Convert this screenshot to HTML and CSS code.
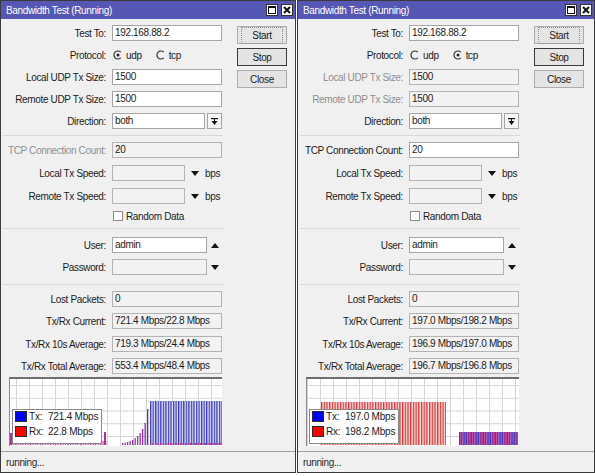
FILE: index.html
```html
<!DOCTYPE html>
<html>
<head>
<meta charset="utf-8">
<link rel="stylesheet" href="styles.css">
</head>
<body>
<div class="desk">
  <!-- LEFT WINDOW (UDP) -->
  <div class="win">
    <div class="title">
      <span class="title-text">Bandwidth Test (Running)</span>
      <span class="tbtn"><svg width="10" height="10" viewBox="0 0 10 10"><rect x="1.5" y="1.5" width="7" height="7" fill="none" stroke="#111" stroke-width="1"/><rect x="1.5" y="1.5" width="7" height="1.5" fill="#111"/></svg></span>
      <span class="tbtn"><svg width="10" height="10" viewBox="0 0 10 10"><path d="M2 2L8 8M8 2L2 8" stroke="#111" stroke-width="2"/></svg></span>
    </div>
    <div class="main">
      <div class="form">
        <div class="row"><span class="lbl">Test To:</span><span class="inp w110">192.168.88.2</span></div>
        <div class="row"><span class="lbl">Protocol:</span>
          <span class="radio"><svg width="10" height="10" viewBox="0 0 10 10"><path d="M7.8 2.2A4 4 0 1 0 7.8 7.8" fill="none" stroke="#333" stroke-width="1.2"/><circle cx="5" cy="5" r="1.5" fill="#222"/></svg></span><span class="rl">udp</span>
          <span class="radio"><svg width="10" height="10" viewBox="0 0 10 10"><path d="M7.8 2.2A4 4 0 1 0 7.8 7.8" fill="none" stroke="#333" stroke-width="1.2"/></svg></span><span class="rl">tcp</span>
        </div>
        <div class="row"><span class="lbl">Local UDP Tx Size:</span><span class="inp w110">1500</span></div>
        <div class="row"><span class="lbl">Remote UDP Tx Size:</span><span class="inp w110">1500</span></div>
        <div class="row mb6b"><span class="lbl">Direction:</span><span class="inp w93">both</span><span class="ddbtn"><svg width="13" height="13" viewBox="0 0 13 13"><rect x="3" y="3" width="7" height="1.2" fill="#111"/><polygon points="3.5,6 9.5,6 6.5,10" fill="#111"/><rect x="6" y="4" width="1" height="2" fill="#111"/></svg></span></div>
        <div class="sep s1"></div>
        <div class="row mb7"><span class="lbl dis">TCP Connection Count:</span><span class="inp w110 ro">20</span></div>
        <div class="row mb7"><span class="lbl">Local Tx Speed:</span><span class="inp w73 ro"></span><span class="tri"><svg width="8" height="5" viewBox="0 0 8 5"><polygon points="0,0 8,0 4,5" fill="#111"/></svg></span><span class="unit">bps</span></div>
        <div class="row"><span class="lbl">Remote Tx Speed:</span><span class="inp w73 ro"></span><span class="tri"><svg width="8" height="5" viewBox="0 0 8 5"><polygon points="0,0 8,0 4,5" fill="#111"/></svg></span><span class="unit">bps</span></div>
        <div class="row chk"><span class="lbl"></span><span class="cbox"></span><span class="cl">Random Data</span></div>
        <div class="sep s2"></div>
        <div class="row"><span class="lbl">User:</span><span class="inp w95">admin</span><span class="tri2"><svg width="8" height="5" viewBox="0 0 8 5"><polygon points="0,5 8,5 4,0" fill="#111"/></svg></span></div>
        <div class="row mb9"><span class="lbl">Password:</span><span class="inp w95 ro"></span><span class="tri2"><svg width="8" height="5" viewBox="0 0 8 5"><polygon points="0,0 8,0 4,5" fill="#111"/></svg></span></div>
        <div class="sep s1"></div>
        <div class="row"><span class="lbl">Lost Packets:</span><span class="inp w110 ro">0</span></div>
        <div class="row mb7"><span class="lbl">Tx/Rx Current:</span><span class="inp w110 ro">721.4 Mbps/22.8 Mbps</span></div>
        <div class="row"><span class="lbl">Tx/Rx 10s Average:</span><span class="inp w110 ro">719.3 Mbps/24.4 Mbps</span></div>
        <div class="row mb3"><span class="lbl">Tx/Rx Total Average:</span><span class="inp w110 ro">553.4 Mbps/48.4 Mbps</span></div>
        <div class="graph">
          <svg width="212" height="67" viewBox="0 0 212 67">
            <defs>
              <pattern id="gridA" x="6" y="6" width="13" height="12.75" patternUnits="userSpaceOnUse"><rect width="1" height="12.75" fill="#d6d6d6"/><rect width="13" height="1" fill="#d6d6d6"/></pattern>
              <pattern id="blueA" x="140" y="0" width="2.55" height="67" patternUnits="userSpaceOnUse"><rect width="1.3" height="67" fill="#3c3cc0"/></pattern>
              <pattern id="pinkA" x="0" y="0" width="2.5" height="67" patternUnits="userSpaceOnUse"><rect width="1.2" height="67" fill="#c02c8c"/></pattern>
            </defs>
            <rect width="212" height="67" fill="url(#gridA)"/>
            <rect x="0" y="62" width="97" height="4" fill="url(#pinkA)"/>
            <rect x="0" y="54" width="2" height="12" fill="#a8309a"/>
            <rect x="94" y="53" width="2" height="13" fill="#a8309a"/>
            <rect x="112" y="64" width="1.3" height="2" fill="#9830a8"/>
            <rect x="114.5" y="63.5" width="1.3" height="2.5" fill="#9830a8"/>
            <rect x="117" y="63" width="1.3" height="3" fill="#9830a8"/>
            <rect x="119.5" y="62" width="1.3" height="4" fill="#9830a8"/>
            <rect x="122" y="61" width="1.3" height="5" fill="#9830a8"/>
            <rect x="124.5" y="59" width="1.3" height="7" fill="#9830a8"/>
            <rect x="127" y="57" width="1.3" height="9" fill="#9830a8"/>
            <rect x="129.5" y="54" width="1.3" height="12" fill="#9830a8"/>
            <rect x="132" y="50" width="1.3" height="16" fill="#9030b0"/>
            <rect x="134.5" y="44" width="1.3" height="22" fill="#8030b8"/>
            <rect x="137" y="30" width="1.3" height="36" fill="#6030c0"/>
            <rect x="140" y="22" width="72" height="44" fill="#e4e4f6"/>
            <rect x="140" y="22" width="72" height="44" fill="url(#blueA)"/>
            <rect x="140" y="64" width="72" height="2" fill="url(#pinkA)"/>
          </svg>
          <div class="legend">
            <div class="lg-row"><span class="sw blue"></span><span class="lk">Tx:</span><span>721.4 Mbps</span></div>
            <div class="lg-row"><span class="sw red"></span><span class="lk">Rx:</span><span>22.8 Mbps</span></div>
          </div>
        </div>
      </div>
      <div class="btns">
        <div class="btn start"><span>Start</span></div>
        <div class="btn stop">Stop</div>
        <div class="btn">Close</div>
      </div>
    </div>
    <div class="status">running...</div>
  </div>

  <!-- RIGHT WINDOW (TCP) -->
  <div class="win wide">
    <div class="title">
      <span class="title-text">Bandwidth Test (Running)</span>
      <span class="tbtn"><svg width="10" height="10" viewBox="0 0 10 10"><rect x="1.5" y="1.5" width="7" height="7" fill="none" stroke="#111" stroke-width="1"/><rect x="1.5" y="1.5" width="7" height="1.5" fill="#111"/></svg></span>
      <span class="tbtn"><svg width="10" height="10" viewBox="0 0 10 10"><path d="M2 2L8 8M8 2L2 8" stroke="#111" stroke-width="2"/></svg></span>
    </div>
    <div class="main">
      <div class="form">
        <div class="row"><span class="lbl">Test To:</span><span class="inp w110">192.168.88.2</span></div>
        <div class="row"><span class="lbl">Protocol:</span>
          <span class="radio"><svg width="10" height="10" viewBox="0 0 10 10"><path d="M7.8 2.2A4 4 0 1 0 7.8 7.8" fill="none" stroke="#333" stroke-width="1.2"/></svg></span><span class="rl">udp</span>
          <span class="radio"><svg width="10" height="10" viewBox="0 0 10 10"><path d="M7.8 2.2A4 4 0 1 0 7.8 7.8" fill="none" stroke="#333" stroke-width="1.2"/><circle cx="5" cy="5" r="1.5" fill="#222"/></svg></span><span class="rl">tcp</span>
        </div>
        <div class="row"><span class="lbl dis">Local UDP Tx Size:</span><span class="inp w110 ro">1500</span></div>
        <div class="row"><span class="lbl dis">Remote UDP Tx Size:</span><span class="inp w110 ro">1500</span></div>
        <div class="row mb6b"><span class="lbl">Direction:</span><span class="inp w93">both</span><span class="ddbtn"><svg width="13" height="13" viewBox="0 0 13 13"><rect x="3" y="3" width="7" height="1.2" fill="#111"/><polygon points="3.5,6 9.5,6 6.5,10" fill="#111"/><rect x="6" y="4" width="1" height="2" fill="#111"/></svg></span></div>
        <div class="sep s1"></div>
        <div class="row mb7"><span class="lbl">TCP Connection Count:</span><span class="inp w110">20</span></div>
        <div class="row mb7"><span class="lbl">Local Tx Speed:</span><span class="inp w73 ro"></span><span class="tri"><svg width="8" height="5" viewBox="0 0 8 5"><polygon points="0,0 8,0 4,5" fill="#111"/></svg></span><span class="unit">bps</span></div>
        <div class="row"><span class="lbl">Remote Tx Speed:</span><span class="inp w73 ro"></span><span class="tri"><svg width="8" height="5" viewBox="0 0 8 5"><polygon points="0,0 8,0 4,5" fill="#111"/></svg></span><span class="unit">bps</span></div>
        <div class="row chk"><span class="lbl"></span><span class="cbox"></span><span class="cl">Random Data</span></div>
        <div class="sep s2"></div>
        <div class="row"><span class="lbl">User:</span><span class="inp w95">admin</span><span class="tri2"><svg width="8" height="5" viewBox="0 0 8 5"><polygon points="0,5 8,5 4,0" fill="#111"/></svg></span></div>
        <div class="row mb9"><span class="lbl">Password:</span><span class="inp w95 ro"></span><span class="tri2"><svg width="8" height="5" viewBox="0 0 8 5"><polygon points="0,0 8,0 4,5" fill="#111"/></svg></span></div>
        <div class="sep s1"></div>
        <div class="row"><span class="lbl">Lost Packets:</span><span class="inp w110 ro">0</span></div>
        <div class="row mb7"><span class="lbl">Tx/Rx Current:</span><span class="inp w110 ro">197.0 Mbps/198.2 Mbps</span></div>
        <div class="row"><span class="lbl">Tx/Rx 10s Average:</span><span class="inp w110 ro">196.9 Mbps/197.0 Mbps</span></div>
        <div class="row mb3"><span class="lbl">Tx/Rx Total Average:</span><span class="inp w110 ro">196.7 Mbps/196.8 Mbps</span></div>
        <div class="graph">
          <svg width="212" height="67" viewBox="0 0 212 67">
            <defs>
              <pattern id="gridB" x="0" y="6" width="13" height="12.75" patternUnits="userSpaceOnUse"><rect width="1" height="12.75" fill="#d6d6d6"/><rect width="13" height="1" fill="#d6d6d6"/></pattern>
              <pattern id="redB" x="14" y="0" width="2.7" height="67" patternUnits="userSpaceOnUse"><rect width="1.3" height="67" fill="#e03030"/></pattern>
              <pattern id="purB" x="152" y="0" width="2.4" height="67" patternUnits="userSpaceOnUse"><rect width="1.2" height="67" fill="#3838c8"/><rect x="1.2" width="1.2" height="67" fill="#c83080"/></pattern>
            </defs>
            <rect width="212" height="67" fill="url(#gridB)"/>
            <rect x="14" y="23" width="125" height="43" fill="#f8e4e4"/>
            <rect x="14" y="23" width="125" height="43" fill="url(#redB)"/>
            <rect x="152" y="53" width="59" height="13" fill="url(#purB)"/>
          </svg>
          <div class="legend">
            <div class="lg-row"><span class="sw blue"></span><span class="lk">Tx:</span><span>197.0 Mbps</span></div>
            <div class="lg-row"><span class="sw red"></span><span class="lk">Rx:</span><span>198.2 Mbps</span></div>
          </div>
        </div>
      </div>
      <div class="btns">
        <div class="btn start"><span>Start</span></div>
        <div class="btn stop">Stop</div>
        <div class="btn">Close</div>
      </div>
    </div>
    <div class="status">running...</div>
  </div>
</div>
</body>
</html>
```

FILE: styles.css
```css
* { box-sizing: border-box; }

body {
  margin: 0;
  background: #ffffff;
  font-family: "Liberation Sans", Arial, sans-serif;
  font-size: 10px;
  letter-spacing: -0.35px;
  color: #1c1c1c;
}

.desk {
  display: flex;
  gap: 1px;
}

.win {
  width: 296px;
  height: 473px;
  border: 1px solid #3a3a3a;
  background: #f0f0f0;
  display: flex;
  flex-direction: column;
}

.win.wide { width: 298px; }

.title {
  height: 18px;
  background: #5656b4;
  color: #ffffff;
  display: flex;
  align-items: center;
  padding: 0 2px 0 5px;
  flex: none;
}

.title-text {
  flex: 1;
  font-size: 10px;
  padding-top: 1px;
}

.tbtn {
  width: 12px;
  height: 12px;
  background: #ffffff;
  border: 1px solid #333;
  margin-left: 3px;
  display: flex;
  align-items: center;
  justify-content: center;
}

.main {
  display: flex;
  padding-top: 6px;
  flex: none;
}

.form { width: 222px; flex: none; }

.row {
  display: flex;
  align-items: center;
  height: 16px;
  margin-bottom: 6px;
  white-space: nowrap;
}

.row.mb7 { margin-bottom: 7px; }
.row.mb9 { margin-bottom: 9px; }
.row.mb3 { margin-bottom: 3px; }
.row.mb6b { margin-bottom: 6px; }

.lbl {
  width: 105px;
  text-align: right;
  margin-right: 6px;
  flex: none;
}

.lbl.dis { color: #8f8f8f; }

.inp {
  height: 16px;
  border: 1px solid #a6a6a6;
  background: #ffffff;
  padding-left: 2px;
  line-height: 14px;
  flex: none;
  overflow: hidden;
}

.inp.ro {
  background: #f2f2f2;
  border-color: #b4b4b4;
}

.w110 { width: 110px; }
.w93 { width: 93px; }
.w95 { width: 95px; }
.w73 { width: 73px; }

.ddbtn {
  width: 15px;
  height: 16px;
  margin-left: 2px;
  border: 1px solid #a6a6a6;
  background: #f7f7f7;
  display: flex;
  align-items: center;
  justify-content: center;
}

.radio {
  width: 10px;
  height: 10px;
  margin-left: 1px;
  margin-right: 3px;
  display: flex;
}

.rl { margin-right: 13px; }

.tri {
  display: flex;
  margin-left: 6px;
  margin-right: 6px;
}

.tri2 {
  display: flex;
  margin-left: 4px;
}

.unit { }

.row.chk {
  height: 12px;
  margin-bottom: 6px;
}

.cbox {
  width: 10px;
  height: 10px;
  border: 1px solid #8e8e8e;
  background: #ffffff;
  margin-left: 1px;
  margin-right: 3px;
}

.sep {
  height: 1px;
  background: #d8d8d8;
  margin-left: 2px;
  width: 220px;
}

.sep.s1 { margin-bottom: 6px; }
.sep.s2 { margin-bottom: 8px; }

.graph {
  position: relative;
  margin-left: 8px;
  width: 213px;
  height: 69px;
  border-top: 2px solid #6e6e6e;
  border-left: 1px solid #8a8a8a;
  background: #ffffff;
}

.graph svg { display: block; }

.legend {
  position: absolute;
  left: 2px;
  top: 30px;
  width: 90px;
  height: 35px;
  background: #ffffff;
  border: 1px solid #8a8a8a;
  padding: 1px 0 0 2px;
  letter-spacing: -0.2px;
}

.lg-row {
  display: flex;
  align-items: center;
  height: 11px;
  margin-bottom: 4px;
  white-space: nowrap;
}

.sw {
  width: 12px;
  height: 11px;
  border: 1px solid #2a2a2a;
  margin-right: 2px;
  flex: none;
}

.sw.blue { background: #0000ff; }
.sw.red { background: #ff0000; }

.lk { width: 19px; }

.btns {
  margin-left: 14px;
  margin-top: 1px;
  display: flex;
  flex-direction: column;
  gap: 4px;
}

.btn {
  width: 50px;
  height: 18px;
  border: 1px solid #adadad;
  background: #e4e4e4;
  display: flex;
  align-items: center;
  justify-content: center;
}

.btn.start span {
  outline: 1px dotted #909090;
  outline-offset: 2px;
  padding: 0 8px;
}

.btn.stop { border-color: #3a3a3a; }

.status {
  margin-top: 5px;
  border-top: 1px solid #a0a0a0;
  flex: 1;
  padding: 5px 0 0 5px;
  color: #2a2a2a;
}
```
